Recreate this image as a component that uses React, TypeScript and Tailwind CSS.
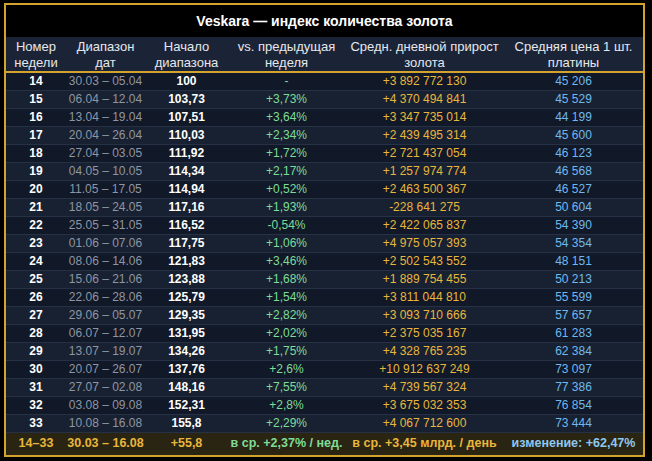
const rows = [
  ["14", "30.03 – 05.04", "100", "-", "+3 892 772 130", "45 206"],
  ["15", "06.04 – 12.04", "103,73", "+3,73%", "+4 370 494 841", "45 529"],
  ["16", "13.04 – 19.04", "107,51", "+3,64%", "+3 347 735 014", "44 199"],
  ["17", "20.04 – 26.04", "110,03", "+2,34%", "+2 439 495 314", "45 600"],
  ["18", "27.04 – 03.05", "111,92", "+1,72%", "+2 721 437 054", "46 123"],
  ["19", "04.05 – 10.05", "114,34", "+2,17%", "+1 257 974 774", "46 568"],
  ["20", "11.05 – 17.05", "114,94", "+0,52%", "+2 463 500 367", "46 527"],
  ["21", "18.05 – 24.05", "117,16", "+1,93%", "-228 641 275", "50 604"],
  ["22", "25.05 – 31.05", "116,52", "-0,54%", "+2 422 065 837", "54 390"],
  ["23", "01.06 – 07.06", "117,75", "+1,06%", "+4 975 057 393", "54 354"],
  ["24", "08.06 – 14.06", "121,83", "+3,46%", "+2 502 543 552", "48 151"],
  ["25", "15.06 – 21.06", "123,88", "+1,68%", "+1 889 754 455", "50 213"],
  ["26", "22.06 – 28.06", "125,79", "+1,54%", "+3 811 044 810", "55 599"],
  ["27", "29.06 – 05.07", "129,35", "+2,82%", "+3 093 710 666", "57 657"],
  ["28", "06.07 – 12.07", "131,95", "+2,02%", "+2 375 035 167", "61 283"],
  ["29", "13.07 – 19.07", "134,26", "+1,75%", "+4 328 765 235", "62 384"],
  ["30", "20.07 – 26.07", "137,76", "+2,6%", "+10 912 637 249", "73 097"],
  ["31", "27.07 – 02.08", "148,16", "+7,55%", "+4 739 567 324", "77 386"],
  ["32", "03.08 – 09.08", "152,31", "+2,8%", "+3 675 032 353", "76 854"],
  ["33", "10.08 – 16.08", "155,8", "+2,29%", "+4 067 712 600", "73 444"],
];

export default function App() {
  return (
    <div className="min-h-screen w-full bg-black pl-[4px] pt-[3px] font-['Liberation_Sans',Arial,sans-serif]">
      <div className="w-[641px] border-2 border-[#d2a42e] bg-[#111827]">
        <table className="w-full table-fixed border-collapse text-center">
          <colgroup>
            <col className="w-[60px]" />
            <col className="w-[79px]" />
            <col className="w-[83px]" />
            <col className="w-[117px]" />
            <col className="w-[159px]" />
            <col />
          </colgroup>
          <thead>
            <tr className="bg-black">
              <th colSpan={6} className="h-[32px] pt-[1px] text-[14px] font-bold text-white">
                Veskara — индекс количества золота
              </th>
            </tr>
            <tr className="border-b-2 border-[#d2a42e] bg-[#1b2436] text-[13px] font-normal leading-[16px] text-[#e6e8ec]">
              <th className="h-[35px] px-1 pt-[1px] font-normal">Номер<br />недели</th>
              <th className="px-1 pt-[1px] font-normal">Диапазон<br />дат</th>
              <th className="px-1 pt-[1px] font-normal">Начало<br />диапазона</th>
              <th className="px-1 pt-[1px] font-normal">vs. предыдущая<br />неделя</th>
              <th className="px-1 pt-[1px] font-normal">Средн. дневной прирост<br />золота</th>
              <th className="px-1 pt-[1px] font-normal">Средняя цена 1 шт.<br />платины</th>
            </tr>
          </thead>
          <tbody className="text-[12px] leading-[17px]">
            {rows.map((r, i) => (
              <tr
                key={r[0]}
                className={`border-b border-[#263145] ${i % 2 === 0 ? "bg-[#111827]" : "bg-[#182131]"}`}
              >
                <td className="h-[18px] font-bold text-white">{r[0]}</td>
                <td className="text-[#8e96a4]">{r[1]}</td>
                <td className="font-bold text-white">{r[2]}</td>
                <td className="text-[#7fdc98]">{r[3]}</td>
                <td className="text-[#e8b63c]">{r[4]}</td>
                <td className="text-[#6fb9ee]">{r[5]}</td>
              </tr>
            ))}
          </tbody>
          <tfoot>
            <tr className="bg-[#2a2412] text-[12.5px] font-bold">
              <td className="h-[22px] whitespace-nowrap text-[#e8b63c]">14–33</td>
              <td className="whitespace-nowrap text-[#e8b63c]">30.03 – 16.08</td>
              <td className="whitespace-nowrap text-[#e8b63c]">+55,8</td>
              <td className="whitespace-nowrap text-[#7fdc98]">в ср. +2,37% / нед.</td>
              <td className="whitespace-nowrap text-[#e8b63c]">в ср. +3,45 млрд. / день</td>
              <td className="whitespace-nowrap text-[#8cc8f0]">изменение: +62,47%</td>
            </tr>
          </tfoot>
        </table>
      </div>
    </div>
  );
}
